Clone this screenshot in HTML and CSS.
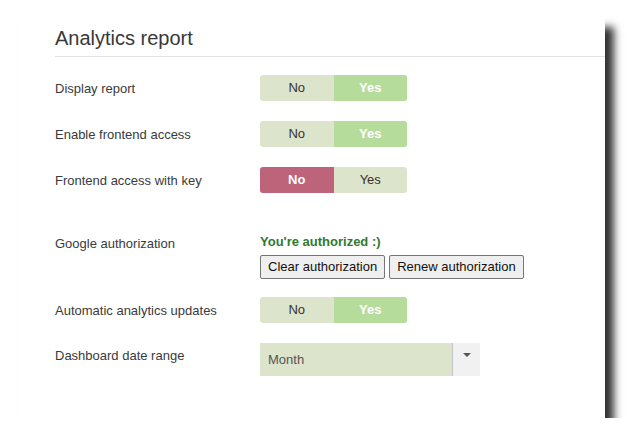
FILE: index.html
```html
<!DOCTYPE html>
<html lang="en">
<head>
  <meta charset="UTF-8">
  <meta name="viewport" content="width=device-width, initial-scale=1.0">
  <title>Analytics report</title>
  <link rel="stylesheet" href="styles.css">
</head>
<body>
  <div class="panel">
    <h2 class="panel-title">Analytics report</h2>

    <div class="field">
      <div class="field-label">Display report</div>
      <div class="toggle">
        <span class="toggle-opt">No</span>
        <span class="toggle-opt on-yes">Yes</span>
      </div>
    </div>

    <div class="field">
      <div class="field-label">Enable frontend access</div>
      <div class="toggle">
        <span class="toggle-opt">No</span>
        <span class="toggle-opt on-yes">Yes</span>
      </div>
    </div>

    <div class="field field-gap">
      <div class="field-label">Frontend access with key</div>
      <div class="toggle">
        <span class="toggle-opt on-no">No</span>
        <span class="toggle-opt">Yes</span>
      </div>
    </div>

    <div class="field field-top auth-field">
      <div class="field-label auth-label">Google authorization</div>
      <div class="auth">
        <div class="auth-status">You're authorized :)</div>
        <div class="auth-buttons">
          <button type="button" class="btn">Clear authorization</button>
          <button type="button" class="btn">Renew authorization</button>
        </div>
      </div>
    </div>

    <div class="field">
      <div class="field-label">Automatic analytics updates</div>
      <div class="toggle">
        <span class="toggle-opt">No</span>
        <span class="toggle-opt on-yes">Yes</span>
      </div>
    </div>

    <div class="field field-top">
      <div class="field-label select-label">Dashboard date range</div>
      <div class="select">
        <span class="select-value">Month</span>
        <span class="select-arrow"></span>
      </div>
    </div>
  </div>
</body>
</html>
```

FILE: styles.css
```css
body {
  margin: 0;
  background-color: #fff;
  font-family: "Liberation Sans", Arial, sans-serif;
  font-size: 13px;
  color: #3a3a3a;
}

.panel {
  margin: 17px 0 0 18px;
  width: 550px;
  height: 392px;
  padding: 9px 0 0 37px;
  background-color: #fff;
  box-shadow: 9px 10px 8px rgba(0, 0, 0, 0.8);
}

.panel-title {
  margin: 0 0 18px;
  padding-bottom: 6px;
  font-size: 20px;
  font-weight: normal;
  line-height: 24px;
  color: #383838;
  border-bottom: 1px solid #e3e3e3;
}

.field {
  display: flex;
  align-items: center;
  margin-bottom: 20px;
  line-height: 16px;
}

.field-top {
  align-items: flex-start;
}

.field-gap {
  margin-bottom: 41px;
}

.auth-field {
  margin-bottom: 18px;
}

.field-label {
  width: 205px;
  flex-shrink: 0;
  padding-top: 1px;
}

.auth-label {
  padding-top: 2px;
}

.select-label {
  padding-top: 5px;
}

.toggle {
  display: flex;
  width: 147px;
  height: 26px;
  border-radius: 3px;
  overflow: hidden;
  background-color: #dde4cc;
}

.toggle-opt {
  flex: 1;
  display: flex;
  align-items: center;
  justify-content: center;
  color: #333;
}

.on-yes {
  background-color: #b5dc9b;
  color: #fff;
  font-weight: bold;
}

.on-no {
  background-color: #bd637a;
  color: #fff;
  font-weight: bold;
}

.auth-status {
  color: #2f7a2f;
  font-weight: bold;
}

.auth-buttons {
  display: flex;
  gap: 4px;
  margin-top: 5px;
}

.btn {
  font-family: "Liberation Sans", Arial, sans-serif;
  font-size: 13px;
  line-height: 16px;
  color: #111;
  padding: 3px 7px;
  background-color: #efefef;
  border: 1px solid #767676;
  border-radius: 2px;
}

.select {
  display: flex;
  width: 220px;
  height: 33px;
}

.select-value {
  width: 184px;
  padding-left: 8px;
  line-height: 33px;
  color: #555;
  background-color: #dde4cc;
  border-right: 1px solid #c4c4c4;
}

.select-arrow {
  flex: 1;
  position: relative;
  background-color: #f1f1f1;
}

.select-arrow::after {
  content: "";
  position: absolute;
  left: 10px;
  top: 10px;
  border-left: 4px solid transparent;
  border-right: 4px solid transparent;
  border-top: 4px solid #555;
}
```
